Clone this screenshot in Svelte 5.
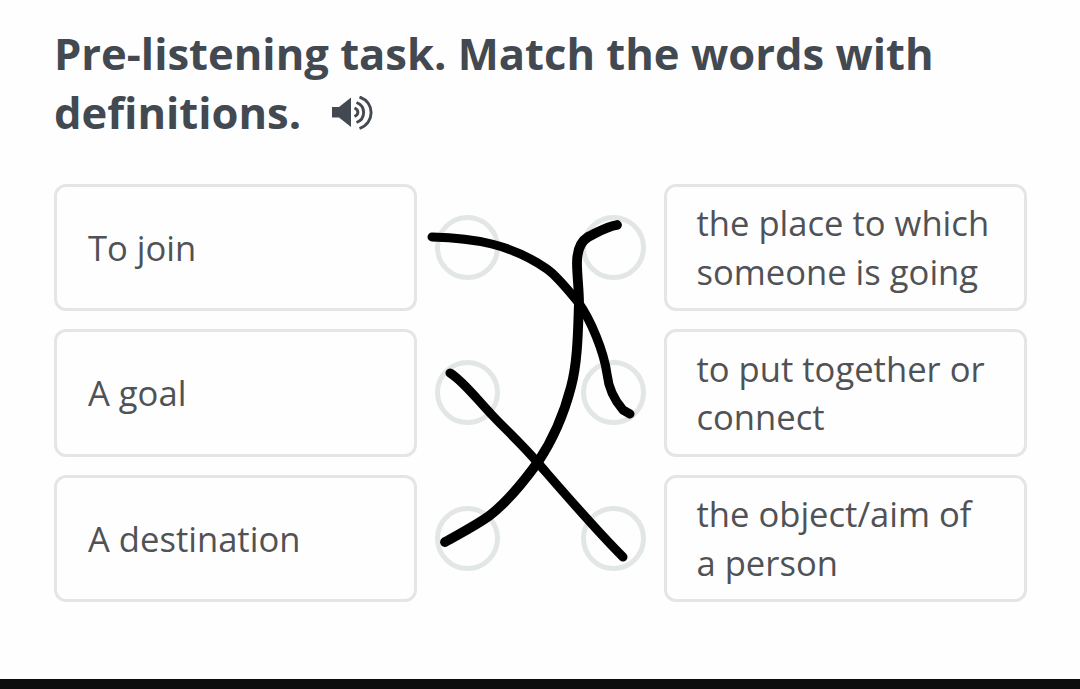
<script>
    let pairs = [
        {word: "To join", definition: "the place to which someone is going"},
        {word: "A goal", definition: "to put together or connect"},
        {word: "A destination", definition: "the object/aim of a person"},
    ];

    // freehand answers, in page coordinates
    let strokes = [
        {d: "M432 237 C474 238 511 244 547 269 C557 276 568 290 578 302 C591 320 604 352 607 374 C609 392 616 402 623 410 L630 414", width: 9},
        {d: "M617 225 C608 226 600 231 588 237 C580 242 577 251 577 263 C577 275 579 290 579 302 C578 328 578 361 571 387 C565 410 554 438 538 462 C522 484 505 504 489 516 C475 526 459 534 445 542", width: 9.8},
        {d: "M450 373 C462 380 475 397 492 415 C506 430 520 442 538 463 C565 494 595 529 623 557", width: 9},
    ];
</script>

<main>
    <h1>
        Pre-listening task. Match the words with definitions.
        <button aria-label="Listen">
            <svg viewBox="0 0 42 36" width="42" height="36">
                <path class="speaker" d="M0 11 H7 L19 1.5 V31 L7 21.5 H0 Z" />
                <path d="M22.5 12 C27 14 27 18.5 22.5 20.5" />
                <path d="M24.5 6.5 C34 10 34 23 24.5 26.5" />
                <path d="M27.5 1 C43 6 43 27 27.5 32.5" />
            </svg>
        </button>
    </h1>

    <div class="rows">
        {#each pairs as pair}
            <div class="row">
                <div class="card">{pair.word}</div>
                <div class="dots">
                    <span class="dot"></span>
                    <span class="dot"></span>
                </div>
                <div class="card definition">{pair.definition}</div>
            </div>
        {/each}
    </div>

    <footer></footer>

    <svg class="drawing" viewBox="0 0 1080 689">
        {#each strokes as stroke}
            <path d={stroke.d} stroke-width={stroke.width} />
        {/each}
    </svg>
</main>

<style>
    :global(body) {
        margin: 0;
        background: #fefefe;
    }

    main {
        position: relative;
        box-sizing: border-box;
        display: flex;
        flex-direction: column;
        width: 1080px;
        height: 689px;
        padding-top: 24px;
        overflow: hidden;
        font-family: "Open Sans", "Noto Sans", sans-serif;
    }

    h1 {
        height: 118px;
        margin: 0 54px;
        color: #434950;
        font-size: 43.55px;
        font-weight: 700;
        line-height: 58.5px;
    }

    button {
        display: inline-block;
        margin: 0 0 0 20px;
        padding: 0;
        border: none;
        background: none;
        line-height: 0;
        vertical-align: -3px;
    }

    button path {
        fill: none;
        stroke: #434950;
        stroke-width: 2.9;
    }

    button .speaker {
        fill: #434950;
        stroke: none;
    }

    .rows {
        display: flex;
        flex-direction: column;
        gap: 18px;
        margin: 41.5px 53.5px 0 54px;
    }

    .row {
        display: grid;
        grid-template-columns: 363px 1fr 363px;
        height: 127.5px;
    }

    .card {
        box-sizing: border-box;
        display: flex;
        align-items: center;
        padding: 1px 24px 0 31px;
        border: 3px solid #e4e6e6;
        border-radius: 12px;
        color: #505255;
        font-size: 34.6px;
        line-height: 48.5px;
    }

    .definition {
        padding-left: 30px;
    }

    .dots {
        display: flex;
        align-items: center;
        justify-content: space-between;
        padding: 0 18px;
    }

    .dot {
        box-sizing: border-box;
        width: 65px;
        height: 65px;
        border: 5px solid #e2e6e7;
        border-radius: 50%;
    }

    footer {
        height: 10px;
        margin-top: auto;
        background: #0d0d0e;
    }

    .drawing {
        position: absolute;
        top: 0;
        left: 0;
        width: 1080px;
        height: 689px;
        pointer-events: none;
    }

    .drawing path {
        fill: none;
        stroke: #000;
        stroke-linecap: round;
        stroke-linejoin: round;
    }
</style>
